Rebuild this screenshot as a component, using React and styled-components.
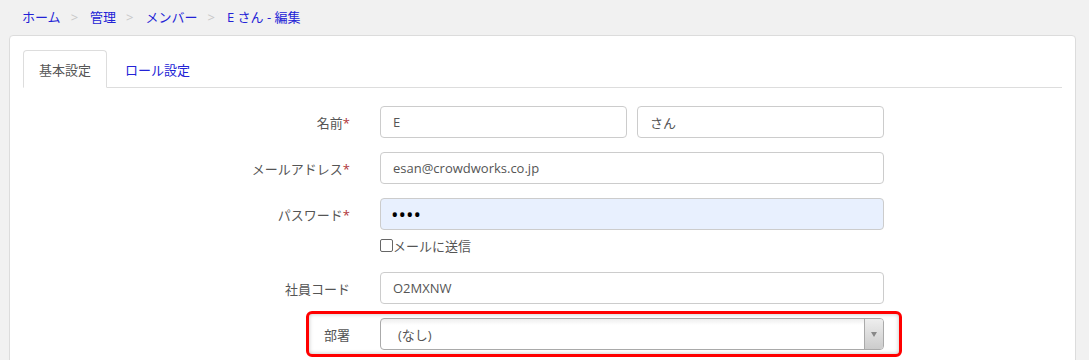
import React from "react";
import styled, { createGlobalStyle } from "styled-components";

const GlobalStyle = createGlobalStyle`
  html, body {
    margin: 0;
    padding: 0;
    background-color: #f1f1f1;
    font-family: "Open Sans", "Noto Sans CJK JP", sans-serif;
    font-size: 13px;
    color: #555;
  }
`;

const Page = styled.div`
  padding: 0 13px 0 9px;
`;

const Breadcrumb = styled.nav`
  display: flex;
  align-items: center;
  height: 35px;
  padding-left: 13px;
  box-sizing: border-box;
  padding-bottom: 2px;
`;

const Crumb = styled.a`
  color: #2323d6;
  text-decoration: none;
`;

const Separator = styled.span`
  color: #c8c8c8;
  padding: 0 12px 0 10px;
`;

const Card = styled.div`
  background-color: #fff;
  border: 1px solid #dcdcdc;
  border-radius: 4px;
  padding: 14px 13px 40px 13px;
  min-height: 400px;
`;

const TabList = styled.div`
  display: flex;
  align-items: flex-end;
  border-bottom: 1px solid #ddd;
`;

const Tab = styled.div`
  display: flex;
  align-items: center;
  padding: 0 15px;
  height: 38px;
  box-sizing: border-box;
  margin-right: 2px;
  margin-bottom: -1px;
  border: 1px solid ${(p) => (p.$active ? "#ddd" : "transparent")};
  border-bottom: 1px solid ${(p) => (p.$active ? "#fff" : "transparent")};
  border-radius: 4px 4px 0 0;
  background-color: ${(p) => (p.$active ? "#fff" : "transparent")};
  color: ${(p) => (p.$active ? "#555" : "#2323d6")};
`;

const Form = styled.div`
  display: flex;
  flex-direction: column;
  align-items: flex-start;
  padding-top: 18px;
`;

const Row = styled.div`
  position: relative;
  display: grid;
  grid-template-columns: 327px 504px;
  column-gap: 30px;
  align-items: center;
  margin-bottom: 14px;
`;

const Label = styled.label`
  text-align: right;
  color: #555;
`;

const Required = styled.span`
  color: #b0353a;
`;

const Inputs = styled.div`
  display: flex;
  gap: 10px;
`;

const TextInput = styled.input`
  flex: 1;
  min-width: 0;
  height: 32px;
  box-sizing: border-box;
  border: 1px solid #ccc;
  border-radius: 4px;
  padding: 0 12px;
  font-family: "Open Sans", "Noto Sans CJK JP", sans-serif;
  font-size: 13px;
  color: #555;
  background-color: #fff;
  outline: none;
`;

const PasswordInput = styled(TextInput)`
  background-color: #e8f0fe;
  color: #000;
  font-size: 20px;
  letter-spacing: 0px;
  padding-left: 10px;
`;

const CheckRow = styled.label`
  display: flex;
  align-items: center;
  height: 26px;
  margin-top: -12px;
  margin-bottom: 14px;
  padding-left: 357px;
`;

const CheckBox = styled.span`
  display: inline-block;
  width: 11px;
  height: 11px;
  border: 1px solid #666;
  border-radius: 2px;
  background-color: #fff;
`;

const Highlight = styled.div`
  position: absolute;
  left: 283px;
  right: -18px;
  top: -7px;
  bottom: -7px;
  border: 3px solid #f00;
  border-radius: 6px;
  box-shadow: inset 0 0 4px rgba(0, 0, 0, 0.25);
  pointer-events: none;
`;

const Select = styled.div`
  display: flex;
  height: 32px;
  box-sizing: border-box;
  border: 1px solid #aaa;
  border-radius: 4px;
  background: linear-gradient(#eee 0%, #fff 20%);
  overflow: hidden;
`;

const SelectValue = styled.div`
  flex: 1;
  display: flex;
  align-items: center;
  padding-left: 17px;
  color: #555;
`;

const SelectArrow = styled.div`
  width: 18px;
  display: flex;
  align-items: center;
  justify-content: center;
  border-left: 1px solid #aaa;
  background: linear-gradient(#eee, #ccc);

  &::after {
    content: "";
    border-left: 3px solid transparent;
    border-right: 3px solid transparent;
    border-top: 5px solid #888;
  }
`;

export default function App() {
  return (
    <Page>
      <GlobalStyle />
      <Breadcrumb>
        <Crumb href="#">ホーム</Crumb>
        <Separator>&gt;</Separator>
        <Crumb href="#">管理</Crumb>
        <Separator>&gt;</Separator>
        <Crumb href="#">メンバー</Crumb>
        <Separator>&gt;</Separator>
        <Crumb href="#">E さん - 編集</Crumb>
      </Breadcrumb>
      <Card>
        <TabList>
          <Tab $active>基本設定</Tab>
          <Tab>ロール設定</Tab>
        </TabList>
        <Form>
          <Row>
            <Label>
              名前<Required>*</Required>
            </Label>
            <Inputs>
              <TextInput readOnly defaultValue="E" />
              <TextInput readOnly defaultValue="さん" />
            </Inputs>
          </Row>
          <Row>
            <Label>
              メールアドレス<Required>*</Required>
            </Label>
            <TextInput readOnly defaultValue="esan@crowdworks.co.jp" />
          </Row>
          <Row>
            <Label>
              パスワード<Required>*</Required>
            </Label>
            <PasswordInput type="password" readOnly defaultValue="abcd" />
          </Row>
          <CheckRow>
            <CheckBox />
            <span>メールに送信</span>
          </CheckRow>
          <Row>
            <Label>社員コード</Label>
            <TextInput readOnly defaultValue="O2MXNW" />
          </Row>
          <Row>
            <Highlight />
            <Label>部署</Label>
            <Select>
              <SelectValue>(なし)</SelectValue>
              <SelectArrow />
            </Select>
          </Row>
        </Form>
      </Card>
    </Page>
  );
}
